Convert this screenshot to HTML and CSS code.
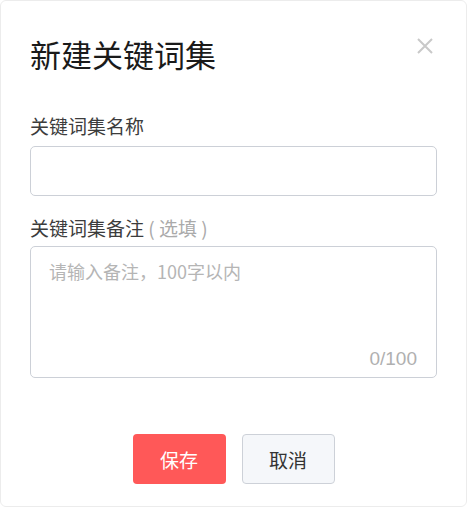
FILE: index.html
```html
<!DOCTYPE html>
<html lang="zh-CN">
<head>
    <meta charset="UTF-8">
    <meta name="viewport" content="width=device-width, initial-scale=1.0">
    <title>新建关键词集</title>
    <link rel="stylesheet" href="styles.css">
</head>
<body>
    <div class="dialog">
        <div class="dialog-header">
            <h1>新建关键词集</h1>
            <span class="close-btn">
                <svg width="16" height="16" viewBox="0 0 16 16">
                    <path d="M1 1L15 15M15 1L1 15" stroke="#c9c9c9" stroke-width="2" fill="none"/>
                </svg>
            </span>
        </div>

        <form class="dialog-body">
            <div class="form-group">
                <label for="setName">关键词集名称</label>
                <input type="text" id="setName">
            </div>
            <div class="form-group">
                <label for="setNote">关键词集备注 <span class="optional">( 选填 )</span></label>
                <div class="textarea-box">
                    <textarea id="setNote" maxlength="100" placeholder="请输入备注，100字以内"></textarea>
                    <span class="counter">0/100</span>
                </div>
            </div>
        </form>

        <div class="dialog-footer">
            <button class="btn btn-primary">保存</button>
            <button class="btn btn-default">取消</button>
        </div>
    </div>
</body>
</html>
```

FILE: styles.css
```css
* {
    box-sizing: border-box;
}
body {
    margin: 0;
    padding: 0;
    font-family: "Noto Sans CJK SC", "Liberation Sans", sans-serif;
    background-color: #fff;
}
.dialog {
    width: 467px;
    height: 507px;
    background: white;
    border: 1px solid #ececec;
    border-radius: 6px;
    padding: 29px 29px 0;
}
.dialog-header {
    display: flex;
    justify-content: space-between;
    align-items: flex-start;
    height: 48px;
}
.dialog-header h1 {
    margin: 0;
    font-size: 31px;
    line-height: 48px;
    font-weight: 400;
    color: #1a1a1a;
}
.close-btn {
    display: block;
    width: 16px;
    height: 16px;
    margin-top: 8px;
    margin-right: 4px;
    cursor: pointer;
}
.close-btn svg {
    display: block;
}
.form-group {
    margin-top: 18px;
}
.dialog-body .form-group:first-child {
    margin-top: 34px;
}
label {
    display: block;
    font-size: 19px;
    line-height: 28px;
    color: #3c3c3c;
}
.optional {
    color: #aaa;
}
input[type="text"] {
    display: block;
    width: 100%;
    height: 50px;
    margin-top: 6px;
    padding: 0 18px;
    border: 1px solid #ccd0d7;
    border-radius: 5px;
    font-size: 18px;
    font-family: inherit;
    outline: none;
}
.textarea-box {
    position: relative;
    margin-top: 4px;
}
textarea {
    display: block;
    width: 100%;
    height: 132px;
    padding: 9px 18px;
    border: 1px solid #ccd0d7;
    border-radius: 5px;
    font-size: 18px;
    line-height: 30px;
    font-family: inherit;
    resize: none;
    outline: none;
}
textarea::placeholder {
    color: #b5b5b5;
}
.counter {
    position: absolute;
    right: 20px;
    bottom: 7px;
    font-size: 19px;
    line-height: 24px;
    color: #b0b0b0;
    font-family: "Liberation Sans", sans-serif;
}
.dialog-footer {
    display: flex;
    justify-content: center;
    gap: 16px;
    margin-top: 56px;
}
.btn {
    width: 93px;
    height: 50px;
    border-radius: 4px;
    font-size: 19px;
    font-family: inherit;
    cursor: pointer;
}
.btn-primary {
    background-color: #ff5858;
    border: none;
    color: white;
}
.btn-default {
    background-color: #f5f7fa;
    border: 1px solid #cdd1d8;
    color: #333;
}
```
